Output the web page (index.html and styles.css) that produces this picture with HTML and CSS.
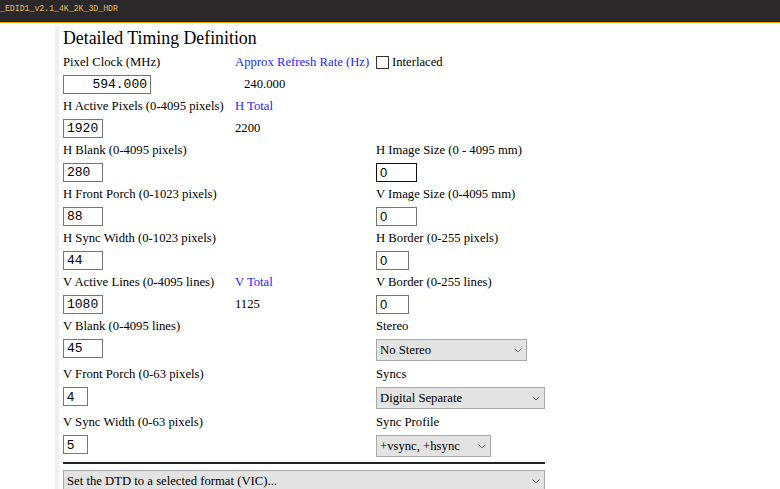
FILE: index.html
```html
<!DOCTYPE html>
<html>
<head>
<meta charset="utf-8">
<link rel="stylesheet" href="styles.css">
</head>
<body>
<div class="topbar"><span class="fname">_EDID1_v2.1_4K_2K_3D_HDR</span></div>
<div class="page">
  <div class="content">
    <h1 class="title">Detailed Timing Definition</h1>
    <div class="grid">
      <div class="cell r1"><div class="lbl">Pixel Clock (MHz)</div><input class="txt w88 right" value="594.000"></div>
      <div class="cell r1"><div class="lbl blue">Approx Refresh Rate (Hz)</div><div class="val indent">240.000</div></div>
      <div class="cell r1"><div class="lbl chkline"><input type="checkbox" class="chk"><span>Interlaced</span></div></div>

      <div class="cell"><div class="lbl">H Active Pixels (0-4095 pixels)</div><input class="txt w40" value="1920"></div>
      <div class="cell"><div class="lbl blue">H Total</div><div class="val">2200</div></div>
      <div class="cell"></div>

      <div class="cell"><div class="lbl">H Blank (0-4095 pixels)</div><input class="txt w40" value="280"></div>
      <div class="cell"></div>
      <div class="cell"><div class="lbl">H Image Size (0 - 4095 mm)</div><input class="txt w41 sans focus" value="0"></div>

      <div class="cell"><div class="lbl">H Front Porch (0-1023 pixels)</div><input class="txt w40" value="88"></div>
      <div class="cell"></div>
      <div class="cell"><div class="lbl">V Image Size (0-4095 mm)</div><input class="txt w41 sans" value="0"></div>

      <div class="cell"><div class="lbl">H Sync Width (0-1023 pixels)</div><input class="txt w40" value="44"></div>
      <div class="cell"></div>
      <div class="cell"><div class="lbl">H Border (0-255 pixels)</div><input class="txt w33 sans" value="0"></div>

      <div class="cell"><div class="lbl">V Active Lines (0-4095 lines)</div><input class="txt w40" value="1080"></div>
      <div class="cell"><div class="lbl blue">V Total</div><div class="val">1125</div></div>
      <div class="cell"><div class="lbl">V Border (0-255 lines)</div><input class="txt w33 sans" value="0"></div>

      <div class="cell"><div class="lbl">V Blank (0-4095 lines)</div><input class="txt w40" value="45"></div>
      <div class="cell"></div>
      <div class="cell"><div class="lbl">Stereo</div>
        <div class="selwrap"><select class="sel w151"><option>No Stereo</option></select><svg class="chev" width="8" height="5" viewBox="0 0 8 5"><path d="M0.5 0.5 L4 4 L7.5 0.5" fill="none" stroke="#6d6d6d" stroke-width="1"/></svg></div>
      </div>

      <div class="cell"><div class="lbl">V Front Porch (0-63 pixels)</div><input class="txt w25 sans" value="4"></div>
      <div class="cell"></div>
      <div class="cell"><div class="lbl">Syncs</div>
        <div class="selwrap"><select class="sel w169"><option>Digital Separate</option></select><svg class="chev" width="8" height="5" viewBox="0 0 8 5"><path d="M0.5 0.5 L4 4 L7.5 0.5" fill="none" stroke="#6d6d6d" stroke-width="1"/></svg></div>
      </div>

      <div class="cell"><div class="lbl">V Sync Width (0-63 pixels)</div><input class="txt w25 sans" value="5"></div>
      <div class="cell"></div>
      <div class="cell"><div class="lbl">Sync Profile</div>
        <div class="selwrap"><select class="sel w115"><option>+vsync, +hsync</option></select><svg class="chev" width="8" height="5" viewBox="0 0 8 5"><path d="M0.5 0.5 L4 4 L7.5 0.5" fill="none" stroke="#6d6d6d" stroke-width="1"/></svg></div>
      </div>
    </div>
    <hr class="rule">
    <div class="selwrap"><select class="sel wfull"><option>Set the DTD to a selected format (VIC)...</option></select><svg class="chev" width="8" height="5" viewBox="0 0 8 5"><path d="M0.5 0.5 L4 4 L7.5 0.5" fill="none" stroke="#6d6d6d" stroke-width="1"/></svg></div>
  </div>
</div>
</body>
</html>
```
FILE: styles.css
```css
html, body {
  margin: 0;
  padding: 0;
  background: #fff;
}
body {
  font-family: "Liberation Serif", "Times New Roman", serif;
  font-size: 12.7px;
  color: #000;
  overflow: hidden;
}
.topbar {
  height: 22px;
  background: #2b2829;
  border-bottom: 1px solid #f2a20c;
}
.fname {
  display: block;
  font-family: "Liberation Mono", monospace;
  font-size: 8.2px;
  line-height: 12px;
  padding-top: 3px;
  color: #e9b95c;
}
.page {
  margin-left: 55px;
  border-left: 4px solid #efefef;
  padding-left: 4px;
  min-height: 470px;
}
.content {
  width: 482px;
}
.title {
  font-size: 17.8px;
  font-weight: normal;
  line-height: 24px;
  margin: 3px 0 4px;
}
.grid {
  display: grid;
  grid-template-columns: 172px 141px 169px;
  row-gap: 5px;
}
.cell {
  display: flex;
  flex-direction: column;
  align-items: flex-start;
  gap: 5px;
}
.lbl {
  height: 15px;
  line-height: 15px;
  white-space: nowrap;
}
.r1 .lbl {
  height: 16px;
  line-height: 16px;
}
.blue {
  color: #1f1fff;
}
.val {
  height: 19px;
  line-height: 19px;
}
.indent {
  padding-left: 9px;
}
.chkline {
  display: flex;
  align-items: center;
}
.chk {
  appearance: none;
  -webkit-appearance: none;
  width: 13px;
  height: 13px;
  margin: 0 3px 0 0;
  border: 1px solid #333;
  background: #fff;
  border-radius: 0;
  box-sizing: border-box;
}
.txt {
  box-sizing: border-box;
  height: 19px;
  margin: 0;
  padding: 0 3px;
  border: 1px solid #767676;
  border-radius: 0;
  font-family: "Liberation Mono", monospace;
  font-size: 13px;
  color: #000;
  background: #fff;
  outline: none;
}
.txt.sans {
  font-family: "Liberation Sans", Arial, sans-serif;
}
.txt.focus {
  border-color: #111;
}
.right {
  text-align: right;
}
.w88 { width: 88px; }
.w40 { width: 40px; }
.w41 { width: 41px; }
.w33 { width: 33px; }
.w25 { width: 25px; }
.selwrap {
  position: relative;
  display: inline-block;
  margin-bottom: 1px;
}
.sel {
  appearance: none;
  -webkit-appearance: none;
  box-sizing: border-box;
  height: 22px;
  margin: 0;
  padding: 0 18px 0 3px;
  border: 1px solid #a9a9a9;
  border-radius: 0;
  background: #e3e3e3;
  font-family: "Liberation Serif", "Times New Roman", serif;
  font-size: 12.7px;
  color: #000;
  outline: none;
  display: block;
}
.chev {
  position: absolute;
  right: 5px;
  top: 9px;
  pointer-events: none;
}
.w151 { width: 151px; }
.w169 { width: 169px; }
.w115 { width: 115px; }
.wfull { width: 482px; }
.rule {
  border: 0;
  height: 2px;
  background: #222;
  margin: 4px 0 6px;
}
```
